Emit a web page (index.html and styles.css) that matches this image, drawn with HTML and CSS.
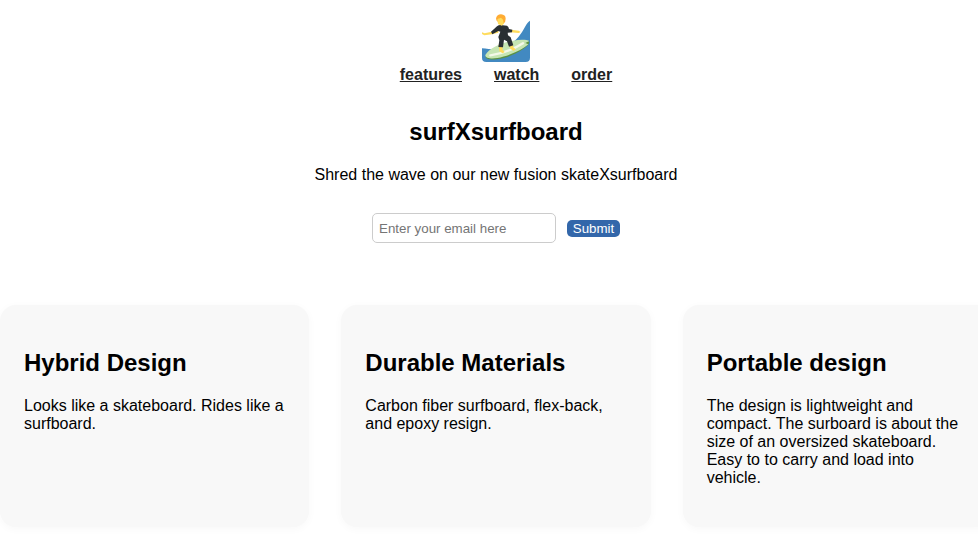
FILE: index.html
```html
<!DOCTYPE html>
<html lang="en">
<head>
<meta charset="utf-8">
<title>surfXsurfboard</title>
<link rel="stylesheet" href="styles.css">
</head>
<body>
<div class="page">
  <header class="header">
    <svg class="logo" viewBox="18 18 144 144" aria-hidden="true">
      <path fill="#4289c1" d="M162 38C151 44 145 63 136 75C124 94 108 108 78 121C60 128 38 122 18 121V149Q18 162 31 162H149Q162 162 162 149Z"/>
      <path fill="#5c9143" d="M29 145C41 126 77 109 111 101C135 96 160 97 160 103C159 117 108 149 63 154C44 156 27 154 29 145Z"/>
      <path fill="#c6e5b3" d="M28 141C40 121 76 103 112 98C132 94 154 95 160 99L148 105L157 109C138 126 97 145 64 150C46 153 27 151 28 141Z"/>
      <path fill="none" stroke="#f4f8e9" stroke-width="7" stroke-linecap="round" d="M43 142C73 138 111 125 141 106"/>
      <path fill="#ffdc5d" d="M18 73L26 76L47 71L68 62L67 74L48 79L25 82L18 78ZM105 65L128 68L134 72L128 75L103 73ZM68 110L79 110L80 126L86 132L80 136L70 130ZM98 110L109 108L112 118L119 124L113 129L103 122Z"/>
      <path fill="#292f33" d="M63 55Q70 49 80 52L93 53Q98 55 99 63L109 65L108 73L95 74L96 82L104 88L112 112L99 116L93 100L84 95L81 118L67 117L70 97L67 87L73 71L67 69L49 79L45 71Z"/>
      <path fill="#ffdc5d" d="M64 34L75 24L86 31L84 47L77 53L66 48Z"/>
      <path fill="#ffac33" d="M60 31Q63 19 75 19Q89 20 89 32Q89 42 83 46L81 35L75 29L65 33L65 42Q60 37 60 31Z"/>
    </svg>
    <nav class="nav">
      <a class="nav-link" href="#features">features</a>
      <a class="nav-link" href="#watch">watch</a>
      <a class="nav-link" href="#order">order</a>
    </nav>
  </header>
  <section class="hero">
    <h2 class="title">surfXsurfboard</h2>
    <p class="text">Shred the wave on our new fusion skateXsurfboard</p>
    <form class="form">
      <input class="email" type="email" placeholder="Enter your email here">
      <button class="submit" type="submit">Submit</button>
    </form>
  </section>
  <section class="cards" id="features">
    <article class="card">
      <h2 class="title">Hybrid Design</h2>
      <p class="text">Looks like a skateboard. Rides like a surfboard.</p>
    </article>
    <article class="card">
      <h2 class="title">Durable Materials</h2>
      <p class="text">Carbon fiber surfboard, flex-back, and epoxy resign.</p>
    </article>
    <article class="card">
      <h2 class="title">Portable design</h2>
      <p class="text">The design is lightweight and compact. The surboard is about the size of an oversized skateboard. Easy to to carry and load into vehicle.</p>
    </article>
  </section>
</div>
</body>
</html>
```

FILE: styles.css
```css
* {
  box-sizing: border-box;
}

body {
  margin: 0;
  overflow: hidden;
  background: #fff;
  color: #000;
  font: 16px/18px "Liberation Sans", Arial, sans-serif;
}

.page {
  width: 992px;
  padding-bottom: 30px;
}

.header {
  display: flex;
  flex-direction: column;
  align-items: center;
  padding-top: 14px;
}

.logo {
  display: block;
  width: 48px;
  height: 48px;
  margin-left: 20px;
}

.nav {
  display: flex;
  gap: 32px;
  margin-top: 4px;
  padding-left: 20px;
}

.nav-link {
  color: #222;
  font-weight: bold;
}

.hero {
  display: flex;
  flex-direction: column;
  align-items: center;
  padding-top: 14px;
}

.title {
  margin: 20px 0 21px;
  font-size: 24px;
  line-height: 27px;
}

.text {
  margin: 0 0 16px;
}

.form {
  display: flex;
  align-items: center;
  gap: 11px;
  margin-top: 13px;
}

.email {
  width: 184px;
  height: 30px;
  margin: 0;
  padding: 0 6px;
  border: 1px solid #ccc;
  border-radius: 5px;
  font: 13.333px "Liberation Sans", Arial, sans-serif;
}

.submit {
  width: 53px;
  height: 17px;
  padding: 0;
  border: 0;
  border-radius: 5px;
  background: #3367aa;
  color: #fff;
  font: 13.333px/17px "Liberation Sans", Arial, sans-serif;
}

.cards {
  display: grid;
  grid-template-columns: repeat(3, 1fr);
  gap: 32px;
  margin-top: 62px;
}

.card {
  padding: 24px;
  border-radius: 16px;
  background: #f8f8f8;
  box-shadow: 0 2px 8px rgba(0, 0, 0, 0.03);
}
```
